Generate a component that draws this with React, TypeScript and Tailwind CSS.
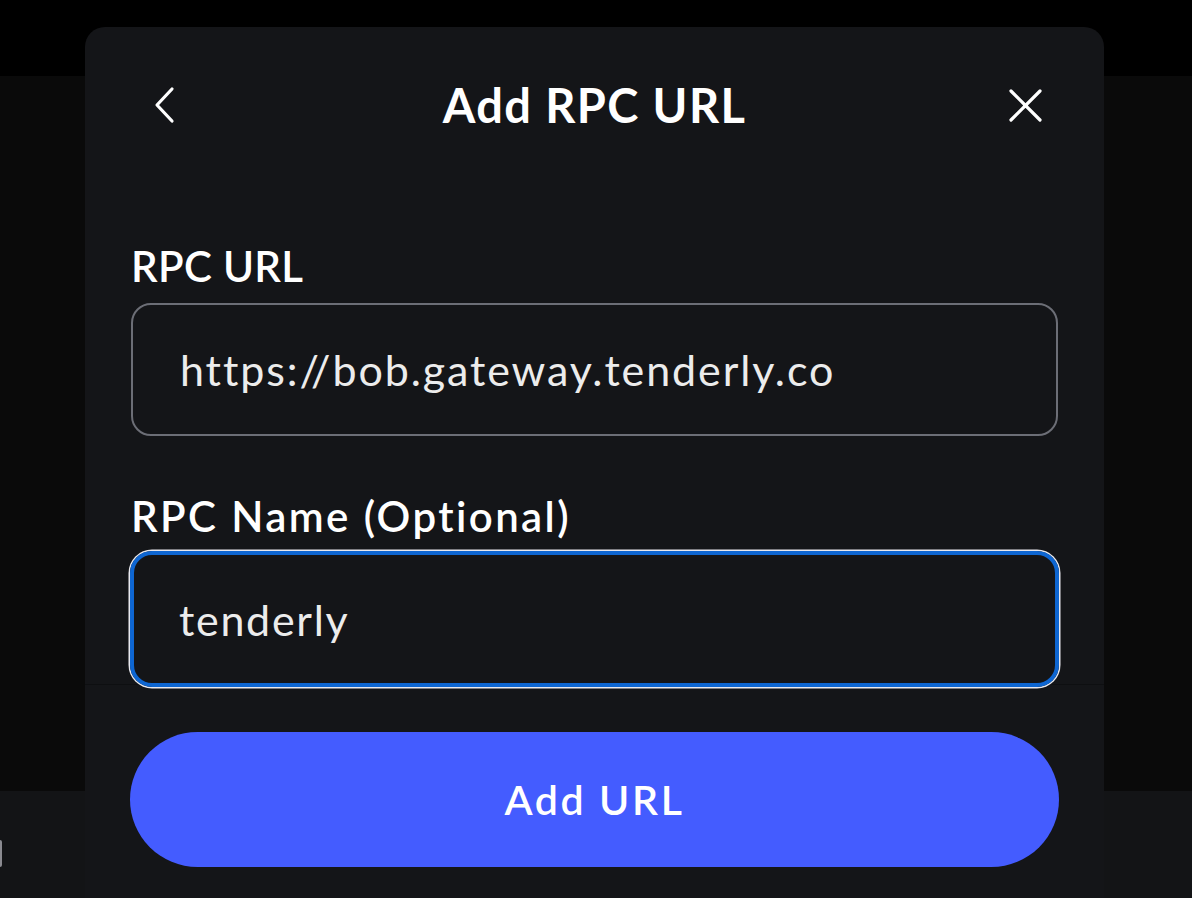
import React from "react";

export default function App() {
  return (
    <div
      className="relative w-[1192px] h-[898px] overflow-hidden bg-black"
      style={{ fontFamily: "Lato, 'Noto Sans', sans-serif" }}
    >
      {/* page behind modal */}
      <div className="flex flex-col h-full">
        <div className="h-[76px] bg-black" />
        <div className="h-[715px] bg-[#0a0a0a]" />
        <div className="flex-1 bg-[#131416] relative">
          <div className="absolute left-0 top-[49px] w-[2px] h-[27px] rounded-r bg-[#8a8a90]" />
        </div>
      </div>

      {/* modal */}
      <div className="absolute left-[85px] top-[27px] w-[1019px] h-[900px] rounded-t-[20px] bg-[#141518] flex flex-col">
        <div className="px-[46px]">
          {/* header */}
          <div className="h-[156px] flex items-center justify-between">
            <div className="w-[80px] flex items-center">
              <svg width="22" height="38" viewBox="0 0 22 38" className="ml-[22px]">
                <path d="M19 3 L4 19 L19 35" fill="none" stroke="#ffffff" strokeWidth="3.2" strokeLinecap="round" strokeLinejoin="round" />
              </svg>
            </div>
            <div className="text-white text-[47px] font-bold leading-none tracking-[1.4px]">Add RPC URL</div>
            <div className="w-[80px] flex items-center justify-end">
              <svg width="35" height="35" viewBox="0 0 35 35" className="mr-[15px]">
                <path d="M3 3 L32 32 M32 3 L3 32" fill="none" stroke="#ffffff" strokeWidth="3.2" strokeLinecap="round" />
              </svg>
            </div>
          </div>

          {/* RPC URL */}
          <div className="mt-[58px] h-[50px] text-white text-[42px] font-semibold leading-[50px] tracking-[0.3px]">RPC URL</div>
          <div className="mt-[12px] h-[133px] rounded-[20px] border-2 border-[#6c6e76] flex items-center pl-[47px]">
            <span className="text-[#ececec] text-[43px] leading-none tracking-[1.9px]">https://bob.gateway.tenderly.co</span>
          </div>

          {/* RPC Name */}
          <div className="mt-[55px] h-[50px] text-white text-[42px] font-semibold leading-[50px] tracking-[2.4px]">RPC Name (Optional)</div>
          <div className="mt-[10px] -mx-[1px] h-[136px] rounded-[22px] border-[4px] border-[#0e66d2] shadow-[0_0_0_1.5px_#e8e8ee] flex items-center pl-[45px] relative z-10">
            <span className="text-[#ececec] text-[43px] leading-none tracking-[1.7px]">tenderly</span>
          </div>
        </div>

        {/* footer */}
        <div className="-mt-[3px] border-t border-[#0e0f11] px-[45px] pt-[47px]">
          <button className="w-[929px] h-[135px] rounded-full bg-[#445cff] text-white text-[41px] font-semibold leading-none tracking-[2.6px] flex items-center justify-center">
            Add URL
          </button>
        </div>
      </div>
    </div>
  );
}
